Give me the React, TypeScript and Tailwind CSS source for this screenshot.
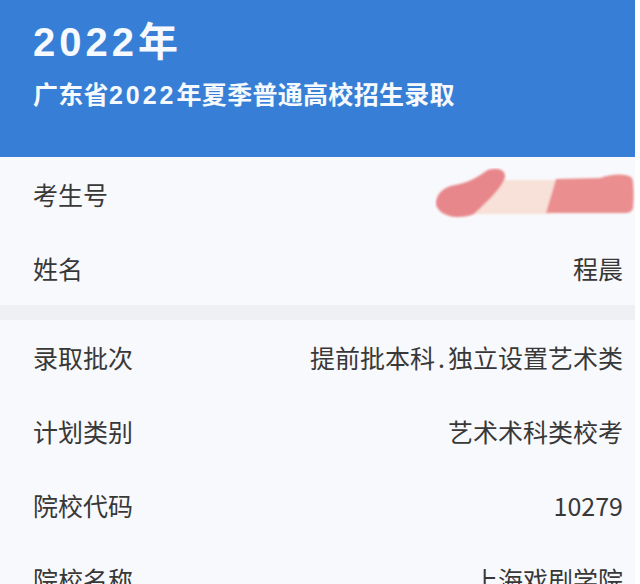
import React from "react";

function Redaction() {
  return (
    <svg width="200" height="52" viewBox="0 0 200 52" className="block">
      <defs>
        <filter id="soft" x="-10%" y="-20%" width="120%" height="140%">
          <feGaussianBlur stdDeviation="0.9" />
        </filter>
      </defs>
      <g filter="url(#soft)">
        <path d="M60 12 L123 12 L116 46 L34 46 Z" fill="#f8e1d8" />
        <path
          d="M1 37 C0 27, 8 19, 20 17 C33 15, 43 9, 51 3 C58 -1, 71 0, 70 9 C68 19, 52 34, 39 46 C28 51, 6 51, 1 37 Z"
          fill="#e8878b"
        />
        <path
          d="M121 11 L165 10 C176 6, 191 5, 197 10 C199 14, 199 36, 198 40 C197 44, 194 45, 189 45 L111 45 Z"
          fill="#ea8e8f"
        />
      </g>
    </svg>
  );
}

function Row({ label, value }: { label: string; value: React.ReactNode }) {
  return (
    <div className="flex h-[74px] items-center justify-between pl-[33px] pr-[12px] text-[25px] leading-[25px] text-[#383838]">
      <span>{label}</span>
      {typeof value === "string" ? <span>{value}</span> : value}
    </div>
  );
}

export default function App() {
  return (
    <div className="h-[584px] w-[640px] overflow-hidden bg-white font-['Noto_Sans_CJK_SC','Liberation_Sans',sans-serif]">
      <div className="w-[635px] bg-[#f8f9fc]">
        <header className="h-[157px] bg-[#377fd6] pl-[33px] pt-[18px] font-['Liberation_Sans','Noto_Sans_CJK_SC',sans-serif] text-[#f6f9fd]">
          <div className="text-[40px] font-bold leading-[48px]">
            <span className="tracking-[4px]">2022</span>年
          </div>
          <div className="mt-[13px] text-[25px] font-bold leading-[32px] tracking-[0.3px]">
            广东省<span className="tracking-[3px]">2022</span>年夏季普通高校招生录取
          </div>
        </header>
        <Row label="考生号" value={<div className="-mr-[12px]"><Redaction /></div>} />
        <Row label="姓名" value="程晨" />
        <div className="h-[15px] bg-[#eef0f3]" />
        <Row
          label="录取批次"
          value={
            <span>
              提前批本科<span className="mx-[3px]">.</span>独立设置艺术类
            </span>
          }
        />
        <Row label="计划类别" value="艺术术科类校考" />
        <Row label="院校代码" value="10279" />
        <Row label="院校名称" value="上海戏剧学院" />
      </div>
    </div>
  );
}
